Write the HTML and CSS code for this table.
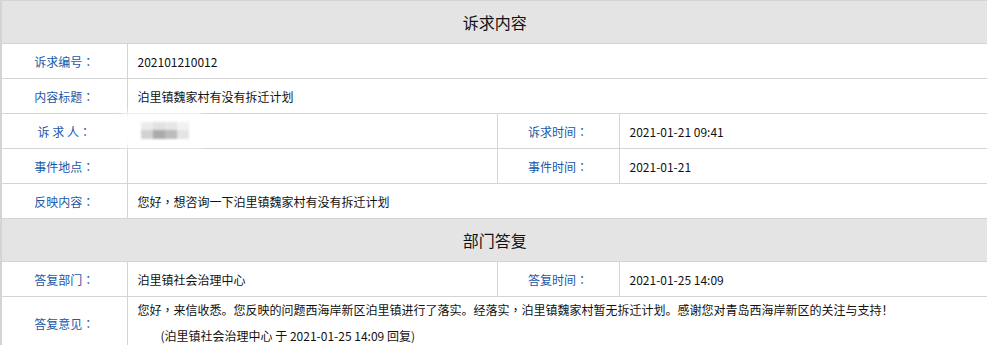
FILE: index.html
```html
<!DOCTYPE html>
<html lang="zh-CN">
<head>
<meta charset="utf-8">
<title>诉求内容</title>
<link rel="stylesheet" href="styles.css">
</head>
<body>
<table class="detail">
  <colgroup>
    <col class="c1"><col class="c2"><col class="c3"><col class="c4">
  </colgroup>
  <tr class="head"><th colspan="4">诉求内容</th></tr>
  <tr><td class="lbl">诉求编号<span class="colon" lang="zh-TW">：</span></td><td class="val" colspan="3">202101210012</td></tr>
  <tr><td class="lbl">内容标题<span class="colon" lang="zh-TW">：</span></td><td class="val" colspan="3">泊里镇魏家村有没有拆迁计划</td></tr>
  <tr><td class="lbl">诉 求 人<span class="colon" lang="zh-TW">：</span></td><td class="val"><div class="masked"><div class="haze"></div><div class="mosaic"><i class="m1"></i><i class="m2"></i><i class="m3"></i><i class="m4"></i><i class="m5"></i><i class="m6"></i><i class="m7"></i><i class="m8"></i></div></div></td><td class="lbl">诉求时间<span class="colon" lang="zh-TW">：</span></td><td class="val">2021-01-21 09:41</td></tr>
  <tr><td class="lbl">事件地点<span class="colon" lang="zh-TW">：</span></td><td class="val"></td><td class="lbl">事件时间<span class="colon" lang="zh-TW">：</span></td><td class="val">2021-01-21</td></tr>
  <tr><td class="lbl">反映内容<span class="colon" lang="zh-TW">：</span></td><td class="val" colspan="3">您好<span class="colon" lang="zh-TW">，</span>想咨询一下泊里镇魏家村有没有拆迁计划</td></tr>
  <tr class="head"><th colspan="4">部门答复</th></tr>
  <tr><td class="lbl">答复部门<span class="colon" lang="zh-TW">：</span></td><td class="val">泊里镇社会治理中心</td><td class="lbl">答复时间<span class="colon" lang="zh-TW">：</span></td><td class="val">2021-01-25 14:09</td></tr>
  <tr class="tall"><td class="lbl">答复意见<span class="colon" lang="zh-TW">：</span></td><td class="val reply" colspan="3"><p>您好<span class="colon" lang="zh-TW">，</span>来信收悉。您反映的问题西海岸新区泊里镇进行了落实。经落实<span class="colon" lang="zh-TW">，</span>泊里镇魏家村暂无拆迁计划。感谢您对青岛西海岸新区的关注与支持！</p><p class="sign">(泊里镇社会治理中心 于 2021-01-25 14:09 回复)</p></td></tr>
</table>
</body>
</html>
```

FILE: styles.css
```css
html, body {
  margin: 0;
  padding: 0;
  background: #fff;
}
body {
  font-family: "Noto Sans CJK SC", "Microsoft YaHei", sans-serif;
  font-size: 12px;
  color: #000;
  overflow: hidden;
}
.detail {
  border-collapse: collapse;
  table-layout: fixed;
  width: 987px;
  border-left: 2px solid #d4d4d4;
}
.c1 { width: 126px; }
.c2 { width: 370px; }
.c3 { width: 122px; }
.c4 { width: 369px; }
.detail th, .detail td {
  border: 1px solid #d4d4d4;
  padding: 0;
}
.head th {
  height: 42px;
  background: #e4e4e4;
  font-weight: normal;
  font-size: 16px;
  text-align: center;
  color: #111;
}
.detail td {
  height: 34px;
  vertical-align: middle;
}
.lbl {
  text-align: center;
  color: #2057a8;
}
.colon {
  font-family: "Noto Sans CJK TC", "Noto Sans CJK SC", sans-serif;
}
.val {
  padding-left: 10px !important;
  color: #111;
}
.tall td { height: 49px; }
.reply { vertical-align: top !important; }
.reply p {
  margin: 0;
  line-height: 26px;
}
.reply .sign { padding-left: 23px; }

.masked {
  position: relative;
  height: 20px;
}
.haze {
  position: absolute;
  left: -16px;
  top: -8px;
  width: 80px;
  height: 34px;
  background: #fff;
  filter: blur(3px);
}
.mosaic {
  position: absolute;
  left: 3px;
  top: 1px;
  display: grid;
  grid-template-columns: repeat(4, 12px);
  grid-template-rows: 8px 9px;
  filter: blur(1.2px);
}
.mosaic i { display: block; }
.m1 { background: #ececec; }
.m2 { background: #e2e2e2; }
.m3 { background: #e6e6e6; }
.m4 { background: #f2f2f2; }
.m5 { background: #d2d2d2; }
.m6 { background: #ababab; }
.m7 { background: #bcbcbc; }
.m8 { background: #e4e4e4; }
```
